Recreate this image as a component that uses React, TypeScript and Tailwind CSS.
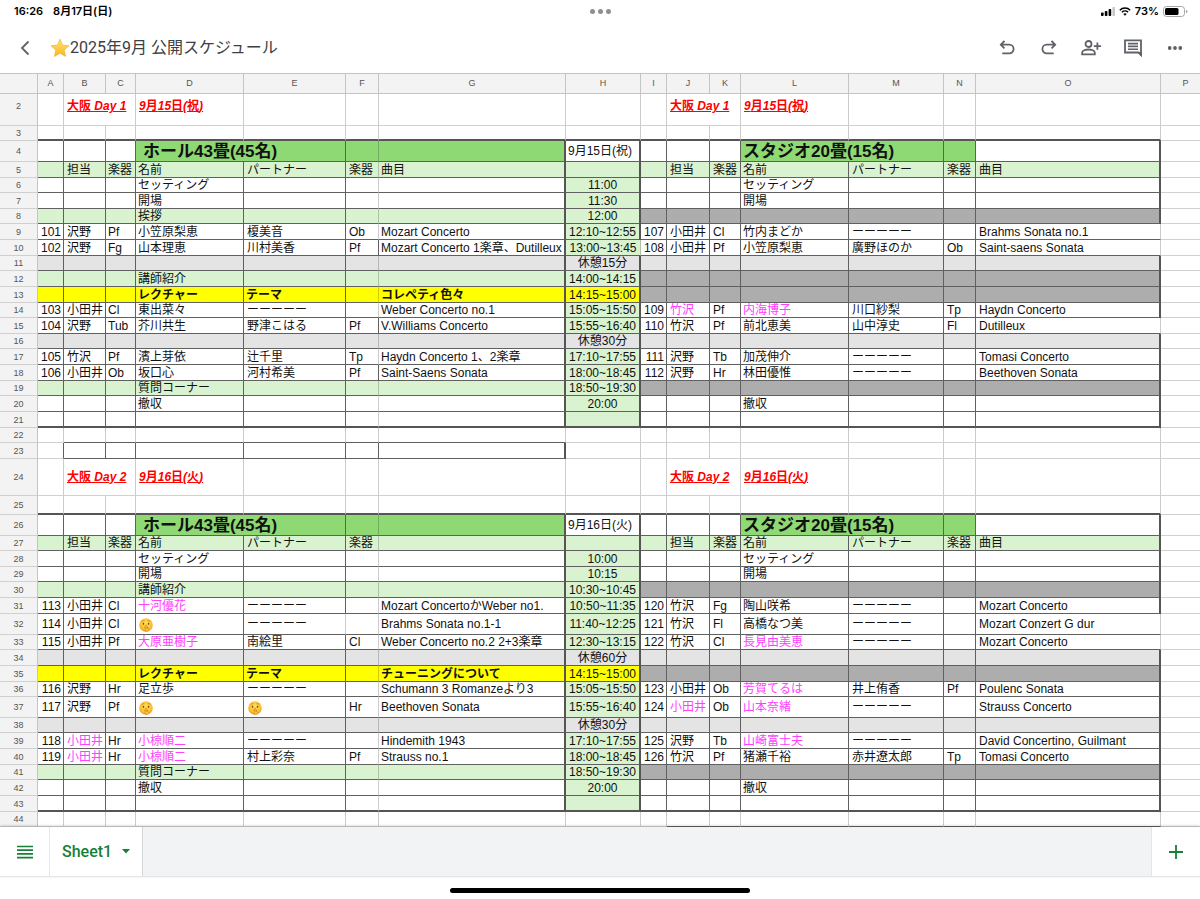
import type { ReactNode } from 'react';
import { clsx } from 'clsx';

type Kind = 'blank' | 'date' | 'box' | 'title' | 'heading' | 'slot' | 'notice' | 'break' | 'lecture';

type SheetRow = {
  n: number;
  height: string;
  kind: Kind;
  // cells A to O separated by |, a leading * marks a highlighted name
  cells?: string;
};

const columns = [
  { id: 'A', width: 'w-[26px]' },
  { id: 'B', width: 'w-[42px]' },
  { id: 'C', width: 'w-[30px]' },
  { id: 'D', width: 'w-[108px]' },
  { id: 'E', width: 'w-[102px]' },
  { id: 'F', width: 'w-[33px]' },
  { id: 'G', width: 'w-[187px]' },
  { id: 'H', width: 'w-[75px]' },
  { id: 'I', width: 'w-[26px]' },
  { id: 'J', width: 'w-[43px]' },
  { id: 'K', width: 'w-[31px]' },
  { id: 'L', width: 'w-[108px]' },
  { id: 'M', width: 'w-[95px]' },
  { id: 'N', width: 'w-[32px]' },
  { id: 'O', width: 'w-[185px]' },
];

const heading = '|担当|楽器|名前|パートナー|楽器|曲目|||担当|楽器|名前|パートナー|楽器|曲目';

const rows: SheetRow[] = [
  { n: 2, height: 'h-8', kind: 'date', cells: '|大阪 Day 1||9月15日(祝)||||||大阪 Day 1||9月15日(祝)' },
  { n: 3, height: 'h-[15px]', kind: 'blank' },
  { n: 4, height: 'h-[21px]', kind: 'title', cells: '|||ホール43畳(45名)||||9月15日(祝)||||スタジオ20畳(15名)' },
  { n: 5, height: 'h-4', kind: 'heading', cells: heading },
  { n: 6, height: 'h-[15px]', kind: 'slot', cells: '|||セッティング||||11:00||||セッティング' },
  { n: 7, height: 'h-4', kind: 'slot', cells: '|||開場||||11:30||||開場' },
  { n: 8, height: 'h-[15px]', kind: 'notice', cells: '|||挨拶||||12:00' },
  { n: 9, height: 'h-4', kind: 'slot', cells: '101|沢野|Pf|小笠原梨恵|榎美音|Ob|Mozart Concerto|12:10~12:55|107|小田井|Cl|竹内まどか|ーーーーー||Brahms Sonata no.1' },
  { n: 10, height: 'h-4', kind: 'slot', cells: '102|沢野|Fg|山本理恵|川村美香|Pf|Mozart Concerto 1楽章、Dutilleux|13:00~13:45|108|小田井|Pf|小笠原梨恵|廣野ほのか|Ob|Saint-saens Sonata' },
  { n: 11, height: 'h-[15px]', kind: 'break', cells: '|||||||休憩15分' },
  { n: 12, height: 'h-4', kind: 'notice', cells: '|||講師紹介||||14:00~14:15' },
  { n: 13, height: 'h-4', kind: 'lecture', cells: '|||レクチャー|テーマ||コレペティ色々|14:15~15:00' },
  { n: 14, height: 'h-[15px]', kind: 'slot', cells: '103|小田井|Cl|東出菜々|ーーーーー||Weber Concerto no.1|15:05~15:50|109|*竹沢|Pf|*内海博子|川口紗梨|Tp|Haydn Concerto' },
  { n: 15, height: 'h-4', kind: 'slot', cells: '104|沢野|Tub|芥川共生|野津こはる|Pf|V.Williams Concerto|15:55~16:40|110|竹沢|Pf|前北恵美|山中淳史|Fl|Dutilleux' },
  { n: 16, height: 'h-[15px]', kind: 'break', cells: '|||||||休憩30分' },
  { n: 17, height: 'h-4', kind: 'slot', cells: '105|竹沢|Pf|濱上芽依|辻千里|Tp|Haydn Concerto 1、2楽章|17:10~17:55|111|沢野|Tb|加茂伸介|ーーーーー||Tomasi Concerto' },
  { n: 18, height: 'h-4', kind: 'slot', cells: '106|小田井|Ob|坂口心|河村希美|Pf|Saint-Saens Sonata|18:00~18:45|112|沢野|Hr|林田優惟|ーーーーー||Beethoven Sonata' },
  { n: 19, height: 'h-[15px]', kind: 'notice', cells: '|||質問コーナー||||18:50~19:30' },
  { n: 20, height: 'h-4', kind: 'slot', cells: '|||撤収||||20:00||||撤収' },
  { n: 21, height: 'h-4', kind: 'slot' },
  { n: 22, height: 'h-[15px]', kind: 'blank' },
  { n: 23, height: 'h-4', kind: 'box' },
  { n: 24, height: 'h-[37px]', kind: 'date', cells: '|大阪 Day 2||9月16日(火)||||||大阪 Day 2||9月16日(火)' },
  { n: 25, height: 'h-[19px]', kind: 'blank' },
  { n: 26, height: 'h-[21px]', kind: 'title', cells: '|||ホール43畳(45名)||||9月16日(火)||||スタジオ20畳(15名)' },
  { n: 27, height: 'h-[15px]', kind: 'heading', cells: heading.replace('曲目', '') },
  { n: 28, height: 'h-4', kind: 'slot', cells: '|||セッティング||||10:00||||セッティング' },
  { n: 29, height: 'h-[15px]', kind: 'slot', cells: '|||開場||||10:15||||開場' },
  { n: 30, height: 'h-4', kind: 'notice', cells: '|||講師紹介||||10:30~10:45' },
  { n: 31, height: 'h-4', kind: 'slot', cells: '113|小田井|Cl|*十河優花|ーーーーー||Mozart ConcertoかWeber no1.|10:50~11:35|120|竹沢|Fg|陶山咲希|ーーーーー||Mozart Concerto' },
  { n: 32, height: 'h-[21px]', kind: 'slot', cells: '114|小田井|Cl|:shh:|ーーーーー||Brahms Sonata no.1-1|11:40~12:25|121|竹沢|Fl|高橋なつ美|ーーーーー||Mozart Conzert G dur' },
  { n: 33, height: 'h-[15px]', kind: 'slot', cells: '115|小田井|Pf|*大原亜樹子|南絵里|Cl|Weber Concerto no.2 2+3楽章|12:30~13:15|122|竹沢|Cl|*長見由美恵|ーーーーー||Mozart Concerto' },
  { n: 34, height: 'h-4', kind: 'break', cells: '|||||||休憩60分' },
  { n: 35, height: 'h-4', kind: 'lecture', cells: '|||レクチャー|テーマ||チューニングについて|14:15~15:00' },
  { n: 36, height: 'h-[15px]', kind: 'slot', cells: '116|沢野|Hr|足立歩|ーーーーー||Schumann 3 Romanzeより3|15:05~15:50|123|小田井|Ob|*芳賀てるは|井上侑香|Pf|Poulenc Sonata' },
  { n: 37, height: 'h-[21px]', kind: 'slot', cells: '117|沢野|Pf|:shh:|:shh:|Hr|Beethoven Sonata|15:55~16:40|124|*小田井|Ob|*山本奈緒|ーーーーー||Strauss Concerto' },
  { n: 38, height: 'h-[15px]', kind: 'break', cells: '|||||||休憩30分' },
  { n: 39, height: 'h-4', kind: 'slot', cells: '118|*小田井|Hr|*小椋順二|ーーーーー||Hindemith 1943|17:10~17:55|125|沢野|Tb|*山崎富士夫|ーーーーー||David Concertino, Guilmant' },
  { n: 40, height: 'h-4', kind: 'slot', cells: '119|*小田井|Hr|*小椋順二|村上彩奈|Pf|Strauss no.1|18:00~18:45|126|竹沢|Pf|猪瀬千裕|赤井遼太郎|Tp|Tomasi Concerto' },
  { n: 41, height: 'h-[15px]', kind: 'notice', cells: '|||質問コーナー||||18:50~19:30' },
  { n: 42, height: 'h-4', kind: 'slot', cells: '|||撤収||||20:00||||撤収' },
  { n: 43, height: 'h-4', kind: 'slot' },
  { n: 44, height: 'h-[15px]', kind: 'blank' },
];

const isOutside = (kind: Kind) => kind === 'blank' || kind === 'date' || kind === 'box';

function fillClass(kind: Kind, col: string) {
  const right = col > 'H';
  if (kind === 'title') return 'DEFGLMN'.includes(col) ? 'bg-[#8ed973]' : 'bg-white';
  if (kind === 'heading') return 'bg-[#d9f2d0]';
  if (kind === 'break') return 'bg-[#e4e4e4]';
  if (kind === 'notice') return right ? 'bg-[#adadad]' : 'bg-[#d9f2d0]';
  if (kind === 'lecture') return right ? 'bg-[#adadad]' : 'bg-[#ffff00]';
  if (kind === 'slot' && col === 'H') return 'bg-[#d9f2d0]';
  return 'bg-white';
}

function rightBorder(row: SheetRow, col: string) {
  const dark = 'border-r border-r-[#606060]';
  const thick = 'border-r-2 border-r-[#555]';
  const light = 'border-r border-r-black/20';
  if (row.kind === 'box') {
    if (col === 'G') return thick;
    return col < 'G' ? dark : light;
  }
  if (isOutside(row.kind)) return light;
  if (col === 'F') return [10, 15, 18].includes(row.n) ? dark : light;
  if (col === 'G') return thick;
  if (col === 'H') return row.n === 10 ? light : thick;
  if (col === 'O') return [9, 10, 15, 32, 33].includes(row.n) ? light : thick;
  if (col === 'E' && row.n === 32) return light;
  return dark;
}

function bottomBorder(row: SheetRow, col: string) {
  const dark = 'border-b border-b-[#606060]';
  const light = 'border-b border-b-[#d0d0d0]';
  if ([3, 21, 25, 43].includes(row.n)) return 'border-b-2 border-b-[#555]';
  if (row.n === 22 || row.n === 23) return col >= 'B' && col <= 'G' ? dark : light;
  if (row.n === 44) return col >= 'J' ? dark : light;
  return isOutside(row.kind) ? light : dark;
}

function textClass(row: SheetRow, col: string) {
  if (row.kind === 'date') return 'pl-[3px] font-bold italic text-[#f00] underline';
  if (row.kind === 'title' && col === 'D') return 'pl-[7px] text-[17px] font-bold';
  if (row.kind === 'title' && col === 'L') return 'pl-0.5 text-[17px] font-bold';
  if (row.kind === 'lecture' && col !== 'H') return 'pl-0.5 font-bold';
  if (col === 'A' || col === 'I') return 'pr-0.5 text-right';
  if (col === 'H' && row.kind !== 'title') return 'text-center';
  if ('CDGHL'.includes(col)) return 'pl-0.5';
  return 'pl-[3px]';
}

// only the latin part of the dates is slanted
function Slanted({ text }: { text: string }) {
  return (
    <>
      {text.split(/([大阪月日祝火]+)/).map((part, i) =>
        i % 2 === 1 ? (
          <span key={i} className="not-italic">
            {part}
          </span>
        ) : (
          part
        )
      )}
    </>
  );
}

function Shush() {
  return (
    <svg viewBox="0 0 28 28" role="img" aria-label="🤫" className="ml-px block h-3.5 w-3.5">
      <defs>
        <radialGradient id="face" cx="0.5" cy="0.4" r="0.6">
          <stop offset="0" stopColor="#ffe35c" />
          <stop offset="0.7" stopColor="#fdc02f" />
          <stop offset="1" stopColor="#ee961d" />
        </radialGradient>
      </defs>
      <circle cx="14" cy="14" r="13.5" fill="url(#face)" />
      <path d="M5 7.500q2.500-3 6-2M17 5.500q3.500-1 6 2" fill="none" stroke="#b8752a" strokeWidth="1.300" />
      <ellipse cx="9" cy="11.500" rx="1.500" ry="2" fill="#6b3f12" />
      <ellipse cx="19" cy="11.500" rx="1.500" ry="2" fill="#6b3f12" />
      <path d="M11 19q3 1.500 7 0" fill="none" stroke="#a5601b" strokeWidth="1.500" />
      <path d="M12.500 26v-11.500q1.500-2.500 3 0v6.500l4 1q1.500 2.500-2 4.500z" fill="#ffc94a" stroke="#d07f1c" strokeWidth="1.200" />
    </svg>
  );
}

function CellText({ row, value }: { row: SheetRow; value: string }) {
  if (value === ':shh:') return <Shush />;
  if (value.startsWith('*')) return <span className="text-[#ff40ff]">{value.slice(1)}</span>;
  if (row.kind === 'date') return <Slanted text={value} />;
  return <>{value}</>;
}

function Row({ row }: { row: SheetRow }) {
  const values = (row.cells ?? '').split('|');
  const merged = row.kind === 'date' ? 'BJ' : row.kind === 'title' ? 'DL' : '';
  const hidden = row.kind === 'date' ? 'CK' : row.kind === 'title' ? 'EM' : '';
  return (
    <tr className={row.height}>
      <th
        scope="row"
        className={clsx(
          'border-b border-r border-b-[#d0d0d0] border-r-[#c4c4c4] bg-[#f3f3f3] p-0 text-center text-[9px] font-normal leading-3 text-[#555]',
          row.n === 2 && 'pb-2'
        )}>
        {row.n}
      </th>
      {columns.map(({ id }, i) =>
        hidden.includes(id) ? null : (
          <td
            key={id}
            colSpan={merged.includes(id) ? 2 : 1}
            className={clsx(
              'overflow-hidden whitespace-nowrap p-0 leading-[13px]',
              fillClass(row.kind, id),
              rightBorder(row, merged.includes(id) ? columns[i + 1].id : id),
              bottomBorder(row, id),
              textClass(row, id),
              row.n === 2 && 'pb-1.5',
              !isOutside(row.kind) && values[i] && 'pt-px'
            )}>
            {values[i] ? <CellText row={row} value={values[i]} /> : null}
          </td>
        )
      )}
      <td className="border-b border-b-[#d0d0d0] bg-white p-0" />
    </tr>
  );
}

function StatusBar() {
  return (
    <div className="grid h-[22px] grid-cols-3 items-center pl-3.5 pr-3 font-['Inter','Noto_Sans_CJK_JP',sans-serif] text-[11px] font-semibold leading-4 text-black">
      <div className="flex gap-2.5">
        <span>16:26</span>
        <span>8月17日(日)</span>
      </div>
      <div className="flex justify-center gap-[3px]">
        <span className="h-[5px] w-[5px] rounded-full bg-[#8e8e93]" />
        <span className="h-[5px] w-[5px] rounded-full bg-[#8e8e93]" />
        <span className="h-[5px] w-[5px] rounded-full bg-[#8e8e93]" />
      </div>
      <div className="flex items-center justify-end gap-1">
        <svg viewBox="0 0 14 9" className="h-[9px] w-3.5" aria-label="Signal">
          <rect x="0" y="5.500" width="2.600" height="3.500" rx="0.800" />
          <rect x="3.800" y="4" width="2.600" height="5" rx="0.800" />
          <rect x="7.600" y="2" width="2.600" height="7" rx="0.800" />
          <rect x="11.400" y="0" width="2.600" height="9" rx="0.800" fill="#c7c7cc" />
        </svg>
        <svg viewBox="0 0 12 9" className="h-[9px] w-3" fill="none" stroke="black" strokeWidth="1.500" aria-label="Wi-Fi">
          <path d="M0.800 3.200a7.500 7.500 0 0 1 10.400 0" />
          <path d="M2.900 5.300a4.500 4.500 0 0 1 6.200 0" />
          <path d="M6 8.800 4.300 7.100a2.500 2.500 0 0 1 3.400 0z" fill="black" stroke="none" />
        </svg>
        <span>73%</span>
        <svg viewBox="0 0 25 11" className="h-[11px] w-[25px]" aria-label="Battery">
          <rect x="0.500" y="0.500" width="21" height="10" rx="3" fill="none" stroke="#a5a5a5" />
          <rect x="2" y="2" width="13.500" height="7" rx="1.600" />
          <path d="M23 3.800v3.400q1.500-0.600 1.500-1.700t-1.500-1.700z" fill="#a5a5a5" />
        </svg>
      </div>
    </div>
  );
}

function IconButton({ label, children }: { label: string; children: ReactNode }) {
  return (
    <button type="button" aria-label={label} className="flex h-10 w-[42px] items-center justify-center text-[#5f6368]">
      {children}
    </button>
  );
}

function Toolbar() {
  return (
    <header className="flex h-[51px] items-center px-1">
      <IconButton label="Back">
        <svg viewBox="0 0 10 16" className="h-4 w-2.5" fill="none" stroke="currentColor" strokeWidth="1.800">
          <path d="M8.500 1.500 2 8l6.500 6.500" />
        </svg>
      </IconButton>
      <h1 className="ml-1 flex flex-1 items-center text-base leading-6 text-[#3c4043]">
        <svg viewBox="0 0 40 40" role="img" aria-label="⭐" className="h-5 w-5">
          <defs>
            <linearGradient id="star" x1="0" y1="0" x2="0" y2="1">
              <stop offset="0" stopColor="#ffe37a" />
              <stop offset="1" stopColor="#fbb81b" />
            </linearGradient>
          </defs>
          <path
            d="m20 2.500 5.200 11.800 12.800 1.300-9.600 8.600 2.800 12.600L20 30.300 8.800 36.800l2.800-12.600L2 15.600l12.800-1.300z"
            fill="url(#star)"
            stroke="#f0b63c"
            strokeWidth="1.500"
            strokeLinejoin="round"
          />
        </svg>
        <span className="font-['Roboto','Noto_Sans_CJK_JP',sans-serif]">2025年9月 公開スケジュール</span>
      </h1>
      <IconButton label="Undo">
        <svg viewBox="0 0 16 16" className="h-4 w-4" fill="none" stroke="currentColor" strokeWidth="1.800">
          <path d="M5.500 1 1.800 4.700l3.700 3.700M2 4.700h8.300a4.300 4.300 0 0 1 0 8.600H3.300" />
        </svg>
      </IconButton>
      <IconButton label="Redo">
        <svg viewBox="0 0 16 16" className="h-4 w-4" fill="none" stroke="currentColor" strokeWidth="1.800">
          <path d="M10.500 1l3.700 3.700-3.700 3.700M14 4.700H5.700a4.300 4.300 0 0 0 0 8.600h7" />
        </svg>
      </IconButton>
      <IconButton label="Share">
        <svg viewBox="0 0 20 16" className="h-4 w-5" fill="none" stroke="currentColor" strokeWidth="1.800">
          <circle cx="7.500" cy="4" r="3" />
          <path d="M1.200 14.300v-1.700c0-2.100 3.500-3.100 6.300-3.100s6.300 1 6.300 3.100v1.700z" />
          <path d="M16.400 2.500v7.200M12.800 6.100H20" />
        </svg>
      </IconButton>
      <IconButton label="Comments">
        <svg viewBox="0 0 18 18" className="h-[18px] w-[18px]" fill="none" stroke="currentColor" strokeWidth="1.800">
          <path d="M1 1.300h16v14.500l-2.300-2.300H1z" />
          <path d="M17.900 17.900v-5l-4.500 0.500z" fill="currentColor" stroke="none" />
          <path d="M4 4.600h10M4 7.400h10M4 10.200h10" strokeWidth="1.600" />
        </svg>
      </IconButton>
      <IconButton label="More">
        <svg viewBox="0 0 16 4" className="h-1 w-4" fill="currentColor">
          <circle cx="2.700" cy="2" r="1.900" />
          <circle cx="8" cy="2" r="1.900" />
          <circle cx="13.300" cy="2" r="1.900" />
        </svg>
      </IconButton>
    </header>
  );
}

function Grid() {
  return (
    <main className="overflow-hidden">
      <table className="w-full table-fixed border-separate border-spacing-0 text-xs text-[#111]">
        <thead>
          <tr className="h-[21px]">
            <th className="w-[38px] border-b border-r border-t border-[#c4c4c4] bg-[#f3f3f3] p-0" aria-label="Row" />
            {columns.map(({ id, width }) => (
              <th
                key={id}
                scope="col"
                className={clsx(
                  'border-b border-r border-t border-[#c4c4c4] bg-[#f3f3f3] p-0 pb-0.5 text-center text-[9px] font-normal leading-3 text-[#555]',
                  width
                )}>
                {id}
              </th>
            ))}
            <th
              scope="col"
              className="border-b border-t border-[#c4c4c4] bg-[#f3f3f3] p-0 pb-0.5 pl-2.5 text-center text-[9px] font-normal leading-3 text-[#555]">
              P
            </th>
          </tr>
        </thead>
        <tbody>
          {rows.map((row) => (
            <Row key={row.n} row={row} />
          ))}
        </tbody>
      </table>
    </main>
  );
}

function SheetTabs() {
  return (
    <nav className="flex h-[50px] border-b border-[#e4e6e8] bg-[#f1f3f4] text-[#188038] shadow-[0_-1px_3px_rgba(0,0,0,0.2)]">
      <button
        type="button"
        aria-label="All sheets"
        className="flex w-[50px] items-center justify-center border-r border-[#e4e6e8] bg-white">
        <svg viewBox="0 0 16 14" className="h-3.5 w-4" stroke="currentColor" strokeWidth="1.700">
          <path d="M0 1.500h16M0 5.200h16M0 8.900h16M0 12.600h16" />
        </svg>
      </button>
      <button
        type="button"
        className="flex items-center gap-2.5 border-r border-[#d5d8da] bg-white px-3 font-['Roboto',sans-serif] text-base font-medium">
        Sheet1
        <svg viewBox="0 0 8 5" className="h-[5px] w-2" fill="currentColor">
          <path d="M0 0h8L4 4.500z" />
        </svg>
      </button>
      <button
        type="button"
        aria-label="Add sheet"
        className="ml-auto flex w-[49px] items-center justify-center border-l border-[#e4e6e8] bg-white">
        <svg viewBox="0 0 14 14" className="h-3.5 w-3.5" stroke="currentColor" strokeWidth="1.800">
          <path d="M7 0v14M0 7h14" />
        </svg>
      </button>
    </nav>
  );
}

export default function App() {
  return (
    <div className="flex min-h-screen flex-col bg-white font-['Liberation_Sans','Noto_Sans_CJK_JP',sans-serif]">
      <StatusBar />
      <Toolbar />
      <Grid />
      <SheetTabs />
      <div className="flex h-[22px] items-center justify-center pt-1">
        <div className="h-[5px] w-1/4 rounded-full bg-black" />
      </div>
    </div>
  );
}
